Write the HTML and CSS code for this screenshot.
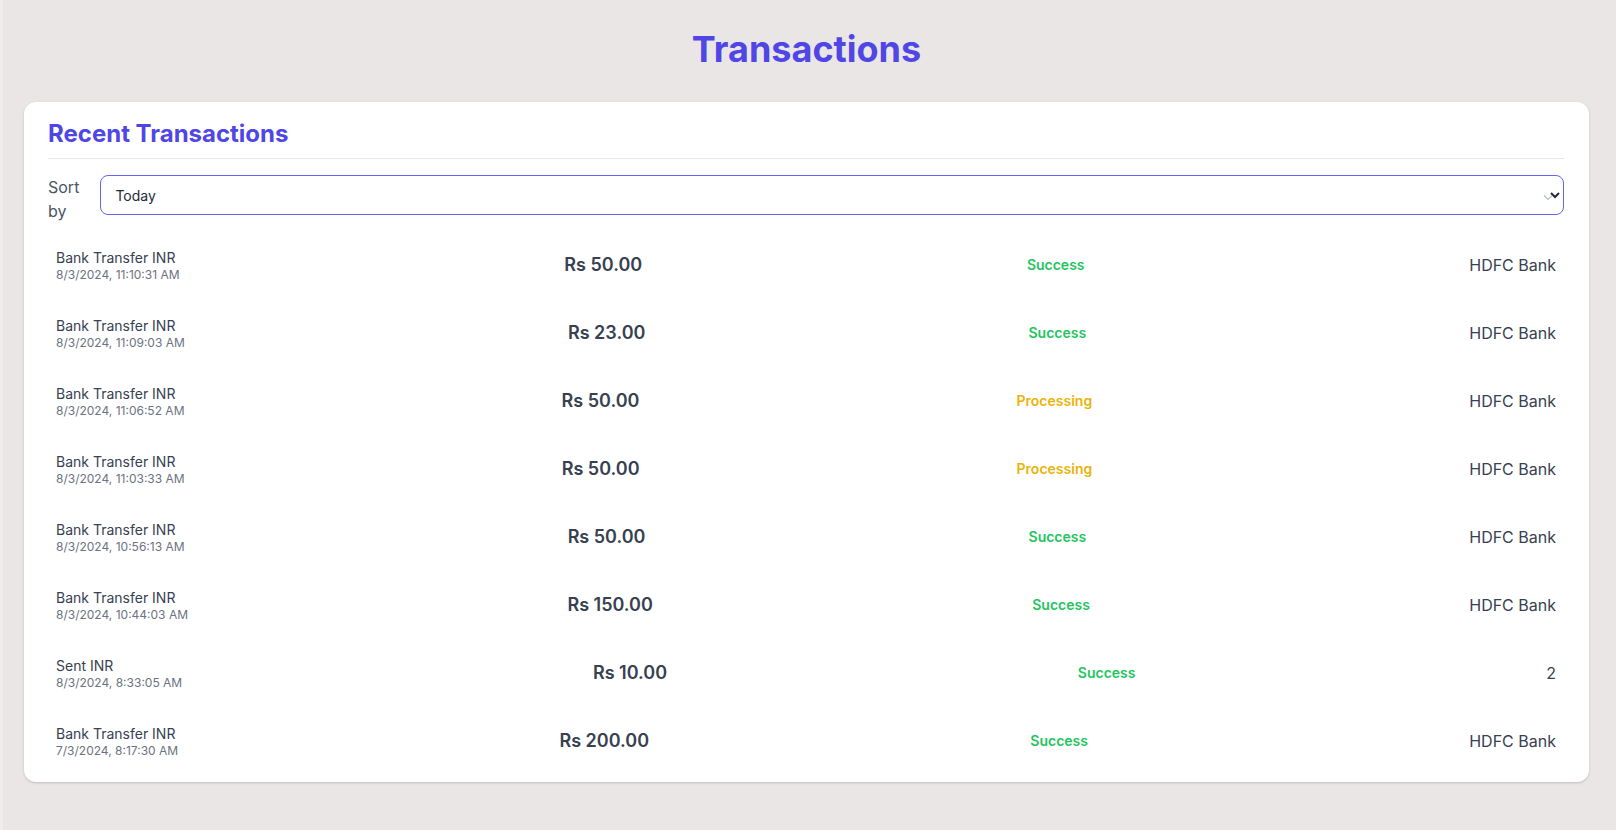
FILE: index.html
```html
<!DOCTYPE html>
<html lang="en">
<head>
<meta charset="utf-8">
<title>Transactions</title>
<link rel="stylesheet" href="styles.css">
</head>
<body>
<div class="page">
  <h1 class="page-title">Transactions</h1>
  <section class="card">
    <h2 class="card-title">Recent Transactions</h2>
    <div class="sort-row">
      <label class="sort-label" for="sort">Sort by</label>
      <div class="select-wrap">
        <select id="sort" class="sort-select">
          <option>Today</option>
          <option>This week</option>
          <option>This month</option>
        </select>
        <svg class="select-chevron" width="10" height="7" viewBox="0 0 10 7" aria-hidden="true"><path d="M1 1.5 L5 5.5 L9 1.5" fill="none" stroke="#b8bcc4" stroke-width="1.2"/></svg>
      </div>
    </div>
    <div class="tx-list">
      <div class="tx-row">
        <div class="tx-info"><div class="tx-name">Bank Transfer INR</div><div class="tx-date">8/3/2024, 11:10:31 AM</div></div>
        <div class="tx-amount">Rs 50.00</div>
        <div class="tx-status success">Success</div>
        <div class="tx-bank">HDFC Bank</div>
      </div>
      <div class="tx-row">
        <div class="tx-info"><div class="tx-name">Bank Transfer INR</div><div class="tx-date">8/3/2024, 11:09:03 AM</div></div>
        <div class="tx-amount">Rs 23.00</div>
        <div class="tx-status success">Success</div>
        <div class="tx-bank">HDFC Bank</div>
      </div>
      <div class="tx-row">
        <div class="tx-info"><div class="tx-name">Bank Transfer INR</div><div class="tx-date">8/3/2024, 11:06:52 AM</div></div>
        <div class="tx-amount">Rs 50.00</div>
        <div class="tx-status processing">Processing</div>
        <div class="tx-bank">HDFC Bank</div>
      </div>
      <div class="tx-row">
        <div class="tx-info"><div class="tx-name">Bank Transfer INR</div><div class="tx-date">8/3/2024, 11:03:33 AM</div></div>
        <div class="tx-amount">Rs 50.00</div>
        <div class="tx-status processing">Processing</div>
        <div class="tx-bank">HDFC Bank</div>
      </div>
      <div class="tx-row">
        <div class="tx-info"><div class="tx-name">Bank Transfer INR</div><div class="tx-date">8/3/2024, 10:56:13 AM</div></div>
        <div class="tx-amount">Rs 50.00</div>
        <div class="tx-status success">Success</div>
        <div class="tx-bank">HDFC Bank</div>
      </div>
      <div class="tx-row">
        <div class="tx-info"><div class="tx-name">Bank Transfer INR</div><div class="tx-date">8/3/2024, 10:44:03 AM</div></div>
        <div class="tx-amount">Rs 150.00</div>
        <div class="tx-status success">Success</div>
        <div class="tx-bank">HDFC Bank</div>
      </div>
      <div class="tx-row">
        <div class="tx-info"><div class="tx-name">Sent INR</div><div class="tx-date">8/3/2024, 8:33:05 AM</div></div>
        <div class="tx-amount">Rs 10.00</div>
        <div class="tx-status success">Success</div>
        <div class="tx-bank">2</div>
      </div>
      <div class="tx-row">
        <div class="tx-info"><div class="tx-name">Bank Transfer INR</div><div class="tx-date">7/3/2024, 8:17:30 AM</div></div>
        <div class="tx-amount">Rs 200.00</div>
        <div class="tx-status success">Success</div>
        <div class="tx-bank">HDFC Bank</div>
      </div>
    </div>
  </section>
</div>
</body>
</html>
```

FILE: styles.css
```css
* { box-sizing: border-box; }

html, body {
  margin: 0;
  padding: 0;
}

body {
  background: #eae6e5;
  border-left: 3px solid #efedeb;
  min-height: 830px;
  font-family: Inter, "Noto Sans", "Liberation Sans", sans-serif;
  color: #374151;
}

.page {
  padding: 29px 27px 0 21px;
}

.page-title {
  margin: 0 0 33px;
  text-align: center;
  font-size: 36px;
  line-height: 40px;
  font-weight: 700;
  color: #4f46e5;
}

.card {
  background: #ffffff;
  border-radius: 12px;
  box-shadow: 0 1px 3px rgba(0, 0, 0, 0.12), 0 1px 2px rgba(0, 0, 0, 0.06);
  padding: 16px 25px 7px 24px;
}

.card-title {
  margin: 0;
  padding-bottom: 8px;
  border-bottom: 1px solid #e5e7eb;
  font-size: 24px;
  line-height: 32px;
  font-weight: 700;
  color: #4f46e5;
}

.sort-row {
  display: flex;
  align-items: flex-start;
  gap: 21px;
  margin-top: 16px;
}

.sort-label {
  flex: 0 1 0;
  min-width: min-content;
  font-size: 16px;
  line-height: 24px;
  color: #4b5563;
}

.select-wrap {
  position: relative;
  flex: 1;
}

.sort-select {
  display: block;
  width: 100%;
  height: 40px;
  padding: 0 12px 0 10px;
  border: 1px solid #6366f1;
  border-radius: 8px;
  background: #ffffff;
  font-family: inherit;
  font-size: 14px;
  color: #1f2937;
  outline: none;
}

.select-chevron {
  position: absolute;
  right: 11px;
  top: 19px;
  pointer-events: none;
}

.tx-list {
  margin-top: 8px;
  padding: 0 8px;
}

.tx-row {
  display: flex;
  justify-content: space-between;
  align-items: center;
  padding: 16px 0;
  height: 68px;
}

.tx-name {
  font-size: 14px;
  line-height: 18px;
  color: #374151;
}

.tx-date {
  font-size: 12px;
  line-height: 15px;
  color: #6b7280;
}

.tx-amount {
  font-size: 18px;
  line-height: 24px;
  font-weight: 600;
  color: #374151;
}

.tx-status {
  font-size: 14px;
  line-height: 20px;
  font-weight: 600;
}

.tx-status.success { color: #22c55e; }
.tx-status.processing { color: #eab308; }

.tx-bank {
  font-size: 16px;
  line-height: 24px;
  color: #374151;
}
```
